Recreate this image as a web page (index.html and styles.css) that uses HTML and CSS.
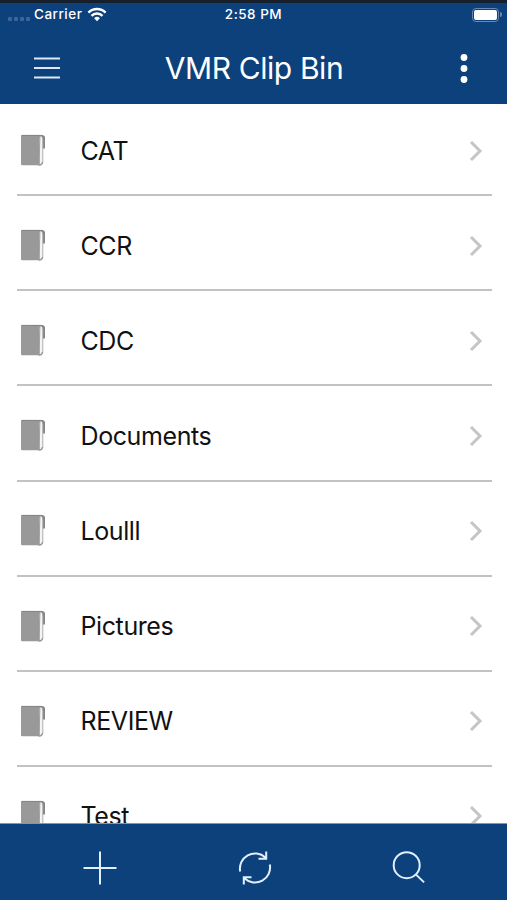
FILE: index.html
```html
<!DOCTYPE html>
<html lang="en">
<head>
<meta charset="utf-8">
<title>VMR Clip Bin</title>
<link rel="stylesheet" href="styles.css">
</head>
<body>
<svg class="defs" width="0" height="0">
  <symbol id="folder" viewBox="0 0 26 33">
    <path d="M20 1.3h2.2q2.8 0 2.8 3V14.5h-3V5z" fill="#858585"/>
    <path d="M20 2h1.2q1.6 1 1.6 4V28q0 2-1.5 2.6H19z" fill="#f4f4f4" stroke="#a6a6a6" stroke-width=".9"/>
    <path d="M2.2 1H20.5L19.6 4V31.2H2.2Q1 31.2 1 30V2.2Q1 1 2.2 1z" fill="#999"/>
    <path d="M18.5 30.8q3.6.6 4-2.8" fill="none" stroke="#999" stroke-width="1.5"/>
    <path d="M1.5 1.4H22q2.3.3 2.5 3" fill="none" stroke="#858585" stroke-width="1"/>
  </symbol>
  <symbol id="chevron" viewBox="0 0 14 22">
    <path d="M2 2l9 9-9 9" fill="none" stroke="#c5c5c7" stroke-width="3"/>
  </symbol>
</svg>
<div class="app">
  <header class="top">
    <div class="status">
      <div class="carrier">
        <span class="signal"><i></i><i></i><i></i><i></i></span>
        <span class="carrier-name">Carrier</span>
        <svg class="wifi" width="20" height="15" viewBox="0 0 20 15">
          <g fill="none" stroke="#fff" stroke-width="2.5">
            <path d="M1.4 5.6a12.3 12.3 0 0 1 17.2 0"/>
            <path d="M4.5 8.8a7.8 7.8 0 0 1 11 0"/>
          </g>
          <path d="M10 14.2l-2.9-2.9a4.1 4.1 0 0 1 5.8 0z" fill="#fff"/>
        </svg>
      </div>
      <div class="time">2:58 PM</div>
      <div class="battery"><span class="cell"><b></b></span><span class="cap"></span></div>
    </div>
    <div class="nav">
      <svg class="menu" width="26" height="24" viewBox="0 0 26 24">
        <path d="M0 2.5h26M0 12h26M0 21.5h26" stroke="#dce8f8" stroke-width="2"/>
      </svg>
      <h1>VMR Clip Bin</h1>
      <svg class="more" width="8" height="30" viewBox="0 0 8 30" fill="#fff">
        <circle cx="4" cy="4.5" r="3.4"/><circle cx="4" cy="15.5" r="3.4"/><circle cx="4" cy="26.5" r="3.4"/>
      </svg>
    </div>
  </header>
  <ul class="list">
    <li><svg class="folder"><use href="#folder"/></svg><span>CAT</span><svg class="chevron"><use href="#chevron"/></svg></li>
    <li><svg class="folder"><use href="#folder"/></svg><span>CCR</span><svg class="chevron"><use href="#chevron"/></svg></li>
    <li><svg class="folder"><use href="#folder"/></svg><span>CDC</span><svg class="chevron"><use href="#chevron"/></svg></li>
    <li><svg class="folder"><use href="#folder"/></svg><span>Documents</span><svg class="chevron"><use href="#chevron"/></svg></li>
    <li><svg class="folder"><use href="#folder"/></svg><span>Loulll</span><svg class="chevron"><use href="#chevron"/></svg></li>
    <li><svg class="folder"><use href="#folder"/></svg><span>Pictures</span><svg class="chevron"><use href="#chevron"/></svg></li>
    <li><svg class="folder"><use href="#folder"/></svg><span>REVIEW</span><svg class="chevron"><use href="#chevron"/></svg></li>
    <li><svg class="folder"><use href="#folder"/></svg><span>Test</span><svg class="chevron"><use href="#chevron"/></svg></li>
  </ul>
  <footer class="toolbar">
    <svg width="36" height="36" viewBox="0 0 36 36"><path d="M18 1.5v33M1.5 18h33"/></svg>
    <svg width="36" height="36" viewBox="0 0 36 36">
      <path d="M3.2 21.5A15.2 15.2 0 0 1 28.4 7.4M29.2 1.5V8.8H21.5"/>
      <path d="M32.8 14.5A15.2 15.2 0 0 1 7.6 28.6M6.8 34.5V27.2H14.5"/>
    </svg>
    <svg width="36" height="36" viewBox="0 0 36 36"><circle cx="15.7" cy="15.2" r="13"/><path d="M24.8 24.4l8.3 8"/></svg>
  </footer>
</div>
</body>
</html>
```
FILE: styles.css
```css
* { box-sizing: border-box; }
body { margin: 0; font-family: Inter, "Liberation Sans", sans-serif; background: #fff; }
.defs { display: block; }
.app { height: 900px; display: flex; flex-direction: column; overflow: hidden; }
.top {
  flex: none;
  height: 104px;
  background: #0d417c;
  border-top: 3px solid #16202c;
  color: #fff;
}
.status {
  height: 23px;
  display: grid;
  grid-template-columns: 1fr auto 1fr;
  align-items: center;
  font-size: 13.5px;
  font-weight: 500;
  line-height: 23px;
  letter-spacing: .5px;
  padding: 0 5px 0 8px;
}
.time { margin-left: -3px; }
.carrier { display: flex; align-items: center; }
.signal { display: flex; gap: 2px; width: 26px; padding-top: 8px; }
.signal i { width: 4px; height: 4px; border-radius: 1px; background: #3c6699; }
.wifi { margin-left: 5px; }
.battery { display: flex; align-items: center; justify-content: flex-end; }
.cell { width: 27px; height: 14px; border: 1.5px solid #6688b2; border-radius: 4px; padding: 1px; }
.cell b { display: block; height: 10px; background: #fff; border-radius: 2px; }
.cap { width: 2px; height: 5px; margin-left: 1px; background: #6688b2; border-radius: 0 2px 2px 0; }
.nav {
  height: 84px;
  display: grid;
  grid-template-columns: 1fr auto 1fr;
  align-items: center;
  padding: 0 39px 0 34px;
}
.nav h1 { margin: 0 -3px 0 3px; font-size: 30px; font-weight: 400; letter-spacing: -.4px; line-height: 40px; }
.more { justify-self: end; }
.list { flex: 1; min-height: 0; overflow: hidden; list-style: none; margin: 0; padding: 0; }
.list li {
  display: flex;
  align-items: center;
  height: 95.15px;
  margin: 0 15px 0 17px;
  padding: 5.5px 9px 0 3px;
  border-bottom: 2px solid #c2c2c3;
}
.list li:first-child { height: 92.2px; padding-top: 3px; }
.list span { flex: 1; margin-left: 34.5px; font-size: 25px; line-height: 34px; letter-spacing: -.4px; color: #111; }
.folder { width: 26px; height: 33px; }
.chevron { width: 14px; height: 22px; }
.toolbar {
  flex: none;
  height: 77px;
  display: flex;
  justify-content: space-between;
  align-items: center;
  padding: 12px 80px 0 82px;
  background: #0d417c;
  border-top: 1px solid #7898be;
}
.toolbar svg { fill: none; stroke: #e2efff; stroke-width: 2; }
```
